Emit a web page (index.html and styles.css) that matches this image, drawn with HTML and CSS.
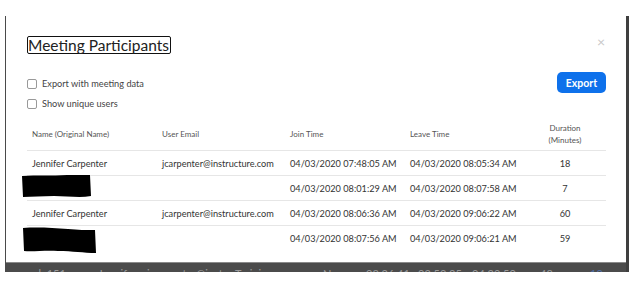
FILE: index.html
```html
<!DOCTYPE html>
<html lang="en">
<head>
    <meta charset="UTF-8">
    <title>Meeting Participants</title>
    <link rel="stylesheet" href="styles.css">
</head>
<body>

<div class="modal">
    <div class="panel">
        <div class="top">
            <h2 class="title">Meeting Participants</h2>
            <span class="close">&times;</span>
        </div>

        <div class="options">
            <div class="checks">
                <label class="check"><span class="box"></span>Export with meeting data</label>
                <label class="check"><span class="box"></span>Show unique users</label>
            </div>
            <button class="export">Export</button>
        </div>

        <div class="table">
            <div class="row head">
                <div>Name (Original Name)</div>
                <div>User Email</div>
                <div>Join Time</div>
                <div>Leave Time</div>
                <div class="dur">Duration<br>(Minutes)</div>
            </div>
            <div class="row">
                <div>Jennifer Carpenter</div>
                <div>jcarpenter@instructure.com</div>
                <div>04/03/2020 07:48:05 AM</div>
                <div>04/03/2020 08:05:34 AM</div>
                <div class="dur">18</div>
            </div>
            <div class="row">
                <div class="hidden-name">
                    <!-- redaction blob -->
                    <svg class="blob blob-a" width="70" height="23" viewBox="0 0 70 23">
                        <path d="M0 1 C15 0 30 1 45 0 C55 0 62 0 68 0 L69 21 C58 23 45 21 32 21 C20 21 10 22 1 22 Z" fill="#000"/>
                    </svg>
                </div>
                <div></div>
                <div>04/03/2020 08:01:29 AM</div>
                <div>04/03/2020 08:07:58 AM</div>
                <div class="dur">7</div>
            </div>
            <div class="row">
                <div>Jennifer Carpenter</div>
                <div>jcarpenter@instructure.com</div>
                <div>04/03/2020 08:06:36 AM</div>
                <div>04/03/2020 09:06:22 AM</div>
                <div class="dur">60</div>
            </div>
            <div class="row last">
                <div class="hidden-name">
                    <svg class="blob blob-b" width="74" height="27" viewBox="0 0 74 27">
                        <path d="M0 1 C15 0 30 1 45 2 C55 3 63 3 72 3 L73 26 C60 26 50 24 35 24 C22 23 10 25 1 24 Z" fill="#000"/>
                    </svg>
                </div>
                <div></div>
                <div>04/03/2020 08:07:56 AM</div>
                <div>04/03/2020 09:06:21 AM</div>
                <div class="dur">59</div>
            </div>
        </div>
    </div>

    <!-- the page behind the dialog, mostly covered -->
    <div class="under">
        <span>al&nbsp;&nbsp;151</span>
        <span>Jennifer</span>
        <span>jcarpenter@instu</span>
        <span>Training</span>
        <span>No</span>
        <span>08:26:41</span>
        <span>02:53:35</span>
        <span>04:29:50</span>
        <span>48</span>
        <span class="link">10</span>
    </div>
</div>

</body>
</html>
```

FILE: styles.css
```css
body {
    margin: 0;
    background-color: #fff;
    font-family: Lato, "Open Sans", Arial, sans-serif;
    color: #333;
}
.modal {
    margin: 16px 0 0 5px;
    width: 620px;
    border-left: 1px solid #4a4a4a;
    border-right: 3px solid #3f3f3f;
}
.panel {
    background-color: #fff;
    padding: 20px 20px 0 21px;
    height: 226px;
}
.top {
    display: flex;
    justify-content: space-between;
    align-items: flex-start;
}
.title {
    margin: 0;
    font-size: 15.5px;
    font-weight: normal;
    line-height: 16px;
    color: #222;
    border: 1px solid #111;
    border-radius: 2px;
    padding: 0 1px 0 0;
}
.close {
    font-size: 14px;
    line-height: 14px;
    color: #c8c8c8;
    margin-top: -1px;
    margin-right: 1px;
}
.options {
    display: flex;
    justify-content: space-between;
    margin-top: 18px;
}
.checks {
    display: flex;
    flex-direction: column;
    gap: 6px;
    padding-top: 5px;
}
.check {
    display: flex;
    align-items: center;
    font-size: 9.2px;
    line-height: 14px;
    color: #444;
}
.box {
    width: 8px;
    height: 8px;
    border: 1px solid #999;
    border-radius: 2px;
    margin-right: 5px;
}
.export {
    width: 49px;
    height: 21px;
    border: none;
    border-radius: 5px;
    background-color: #0e71eb;
    color: #fff;
    font-family: inherit;
    font-size: 10.5px;
    font-weight: bold;
    padding: 0;
}
.table {
    margin-top: 7px;
}
.row {
    display: grid;
    grid-template-columns: 130px 128px 120px 120px 80px;
    align-items: center;
    height: 24px;
    border-bottom: 1px solid #e6e6e6;
    font-size: 9.2px;
    color: #333;
}
.row > div {
    padding-left: 5px;
    white-space: nowrap;
}
.row.head {
    height: 32px;
    margin-top: 1px;
    font-size: 8px;
    color: #555;
    line-height: 12px;
}
.row.last {
    border-bottom: none;
    height: 22px;
}
.row .dur {
    padding-left: 0;
    text-align: center;
}
.hidden-name {
    position: relative;
    height: 24px;
}
.blob {
    position: absolute;
}
.blob-a {
    left: -5px;
    top: -1px;
}
.blob-b {
    left: -4px;
    top: 1px;
}
.under {
    height: 9px;
    overflow: hidden;
    background-color: #4b4b4b;
    border-top: 1px solid #8a8a8a;
    display: grid;
    grid-template-columns: 65px 49px 88px 88px 43px 52px 54px 68px 50px 30px;
    padding-left: 27px;
    font-size: 11px;
    line-height: 11px;
    color: #9a9a9a;
}
.under span {
    margin-top: 5px;
    white-space: nowrap;
}
.under .link {
    color: #4f6fa8;
}
```
